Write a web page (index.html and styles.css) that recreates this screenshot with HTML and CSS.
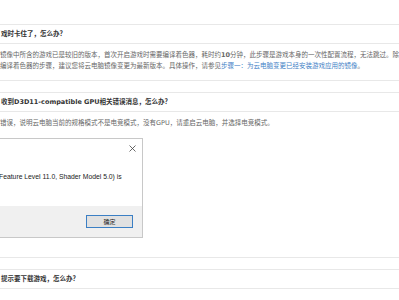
FILE: index.html
```html
<!DOCTYPE html>
<html lang="zh-CN">
<head>
    <meta charset="UTF-8">
    <meta name="viewport" content="width=device-width, initial-scale=1.0">
    <title>常见问题</title>
    <link rel="stylesheet" href="styles.css">
</head>
<body>
    <div class="faq">
        <div class="item">
            <div class="q">戏时卡住了，怎么办？</div>
            <div class="a">
                <p>镜像中所含的游戏已是较旧的版本，首次开启游戏时需要编译着色器，耗时约<b>10</b>分钟，此步骤是游戏本身的一次性配置流程，无法跳过。除<br>编译着色器的步骤，建议您将云电脑镜像变更为最新版本。具体操作，请参见<a href="#">步骤一：为云电脑变更已经安装游戏应用的镜像</a>。</p>
            </div>
        </div>

        <div class="item">
            <div class="q">收到D3D11-compatible GPU相关错误消息，怎么办？</div>
            <div class="a a-tall">
                <p>错误，说明云电脑当前的规格模式不是电竞模式，没有GPU，请重启云电脑，并选择电竞模式。</p>
                <div class="dialog">
                    <div class="dialog-title">
                        <svg class="close" width="7" height="7" viewBox="0 0 7 7">
                            <path d="M0.5 0.5 L6.5 6.5 M6.5 0.5 L0.5 6.5" stroke="#444" stroke-width="0.8" fill="none"/>
                        </svg>
                    </div>
                    <div class="dialog-msg">Feature Level 11.0, Shader Model 5.0) is</div>
                    <div class="dialog-foot">
                        <button class="btn">确定</button>
                    </div>
                </div>
            </div>
        </div>

        <div class="item">
            <div class="q">提示要下载游戏，怎么办？</div>
        </div>

        <div class="item-next"></div>
    </div>
</body>
</html>
```

FILE: styles.css
```css
body {
    margin: 0;
    background: #fff;
    overflow: hidden;
    font-family: "DejaVu Sans", "Noto Sans CJK SC", sans-serif;
}
.faq {
    padding-top: 24px;
}
.item {
    border-top: 1px solid #e8e8e8;
    border-bottom: 1px solid #e8e8e8;
    margin-bottom: 11px;
}
.item-next {
    border-top: 1px solid #e8e8e8;
}
.q {
    height: 18px;
    line-height: 18px;
    padding-left: 1px;
    font-size: 6.5px;
    font-weight: bold;
    color: #333;
    white-space: nowrap;
}
.a {
    border-top: 1px solid #e8e8e8;
    padding: 6px 0 8px 0;
}
.a-tall {
    padding-bottom: 19px;
}
.a p {
    margin: 0;
    font-size: 6.5px;
    line-height: 11px;
    color: #666;
    white-space: nowrap;
}
.a a {
    color: #3f82c6;
    text-decoration: none;
}
.dialog {
    width: 268px;
    margin: 9px 0 0 -127px;
    border: 1px solid #c8c8c8;
    background: #fff;
}
.dialog-title {
    height: 18px;
    display: flex;
    justify-content: flex-end;
    align-items: center;
    padding-right: 6px;
}
.dialog-msg {
    margin-top: 15px;
    padding-left: 125px;
    height: 10px;
    line-height: 10px;
    font-family: "Liberation Sans", sans-serif;
    font-size: 6.8px;
    color: #222;
    white-space: nowrap;
}
.dialog-foot {
    margin-top: 24px;
    height: 31px;
    background: #f0f0f0;
    display: flex;
    justify-content: flex-end;
    align-items: flex-start;
    padding: 9px 9px 0 0;
    box-sizing: border-box;
}
.btn {
    width: 47px;
    height: 13px;
    padding: 0;
    border: 1px solid #3b7fc4;
    background: #e1e1e1;
    font-family: "Noto Sans CJK SC", sans-serif;
    font-size: 6px;
    line-height: 11px;
    color: #222;
}
```
